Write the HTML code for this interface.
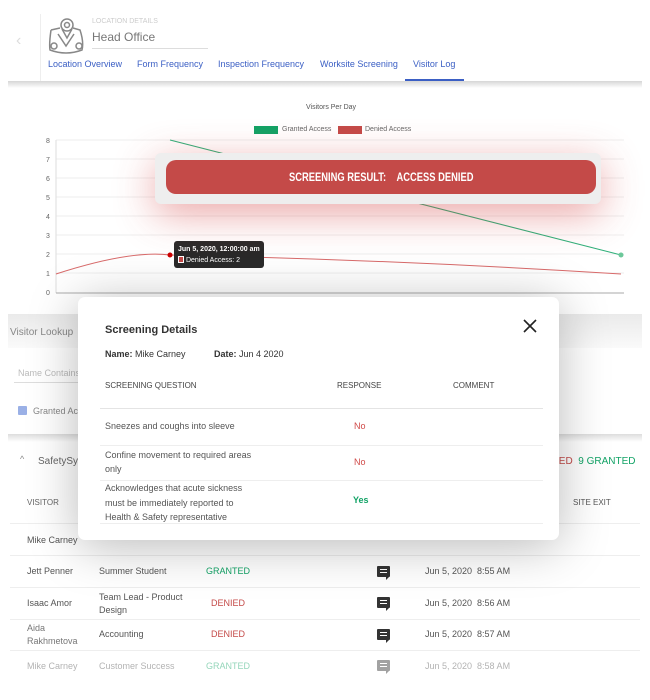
<!DOCTYPE html>
<html><head><meta charset="utf-8"><style>
*{margin:0;padding:0;box-sizing:border-box}
body{width:650px;height:700px;overflow:hidden;background:#fff;font-family:"Liberation Sans",sans-serif;position:relative;color:#555}
.a{position:absolute;white-space:nowrap}
.tab{position:absolute;top:59px;font-size:9px;color:#3b5fc4}
.row{position:absolute;left:10px;width:630px;border-top:1px solid #eee}
.c{font-size:9px;color:#555}
.ic{position:absolute;width:13px;height:11px;background:#333;border-radius:1px}
.ic:after{content:"";position:absolute;left:9px;bottom:-3px;border-left:3px solid #333;border-bottom:3px solid transparent}
.ic i{position:absolute;left:3px;right:3px;height:1px;background:#fff}
</style></head><body>
<!-- header -->
<div class="a" style="left:16px;top:32px;font-size:16px;color:#ddd">‹</div>
<div class="a" style="left:40px;top:14px;width:1px;height:68px;background:#eee"></div>
<svg class="a" style="left:46px;top:16px" width="40" height="38" viewBox="0 0 40 38" fill="none" stroke="#888" stroke-width="1.5">
<circle cx="21" cy="9" r="6"/><circle cx="21" cy="9" r="2.5"/>
<path d="M16 13 L21 22 L26 13"/>
<path d="M5 14 Q3 28 4 34 Q20 40 36 34 Q38 26 34 14 L27 12 M5 14 L14 12"/>
<circle cx="8" cy="30" r="3"/><circle cx="33" cy="30" r="3"/>
<path d="M12 18 L20 30 L28 18"/></svg>
<div class="a" style="left:92px;top:18px;font-size:7px;color:#ccc">LOCATION DETAILS</div>
<div class="a" style="left:92px;top:30px;font-size:12px;color:#777">Head Office</div>
<div class="a" style="left:92px;top:48px;width:116px;height:1px;background:#ddd"></div>
<div class="tab" style="left:48px">Location Overview</div>
<div class="tab" style="left:137px">Form Frequency</div>
<div class="tab" style="left:218px">Inspection Frequency</div>
<div class="tab" style="left:320px">Worksite Screening</div>
<div class="tab" style="left:413px">Visitor Log</div>
<div class="a" style="left:405px;top:79px;width:59px;height:2px;background:#3b5fc4"></div>
<div class="a" style="left:8px;top:81px;width:634px;height:7px;background:linear-gradient(#d6d6d6,#fff)"></div>
<!-- chart -->
<div class="a" style="left:306px;top:104px;font-size:7px;color:#555">Visitors Per Day</div>
<div class="a" style="left:254px;top:126px;width:24px;height:8px;background:#12a366"></div>
<div class="a" style="left:282px;top:126px;font-size:7px;color:#666">Granted Access</div>
<div class="a" style="left:338px;top:126px;width:24px;height:8px;background:#c44a48"></div>
<div class="a" style="left:365px;top:126px;font-size:7px;color:#666">Denied Access</div>
<svg class="a" style="left:0;top:130px" width="650" height="170">
<g font-size="7" fill="#666" font-family="Liberation Sans">
<text x="46" y="13">8</text><text x="46" y="32">7</text><text x="46" y="51">6</text><text x="46" y="70">5</text><text x="46" y="89">4</text><text x="46" y="108">3</text><text x="46" y="127">2</text><text x="46" y="146">1</text><text x="46" y="165">0</text></g>
<g stroke="#eee" stroke-width="1"><line x1="56" y1="10" x2="624" y2="10"/><line x1="56" y1="29" x2="624" y2="29"/><line x1="56" y1="48" x2="624" y2="48"/><line x1="56" y1="67" x2="624" y2="67"/><line x1="56" y1="86" x2="624" y2="86"/><line x1="56" y1="105" x2="624" y2="105"/><line x1="56" y1="124" x2="624" y2="124"/><line x1="56" y1="143" x2="624" y2="143"/></g>
<line x1="56" y1="10" x2="56" y2="163" stroke="#ddd"/>
<line x1="56" y1="163" x2="624" y2="163" stroke="#aaa"/>
<line x1="170" y1="10" x2="621" y2="125" stroke="#2fb07a"/>
<circle cx="621" cy="125" r="2.5" fill="#6cc89a"/>
<path d="M56 144 Q130 120 170 125 Q400 130 621 144" stroke="#d86a6a" fill="none"/>
<circle cx="170" cy="125" r="2.5" fill="#c00"/>
</svg>
<div class="a" style="left:174px;top:241px;width:90px;height:27px;background:#2a2a2a;border-radius:3px;color:#fff;font-size:7px;padding:3px 4px;line-height:11px"><b>Jun 5, 2020, 12:00:00 am</b><br><span style="display:inline-block;width:6px;height:7px;background:#c44a48;vertical-align:-1px;border:1px solid #fff"></span> Denied Access: 2</div>
<!-- banner -->
<div class="a" style="left:155px;top:153px;width:446px;height:51px;background:#eee;border-radius:6px;box-shadow:0 10px 40px rgba(210,60,60,.45)"></div>
<div class="a" style="left:166px;top:160px;width:430px;height:34px;background:#c44a48;border-radius:10px;color:#fff;font-weight:bold;font-size:12px;text-align:center;line-height:34px"><span style="display:inline-block;transform:scaleX(0.78)">SCREENING RESULT:&nbsp;&nbsp;&nbsp;&nbsp;ACCESS DENIED</span></div>
<!-- background lower -->
<div class="a" style="left:8px;top:314px;width:634px;height:34px;background:linear-gradient(#eaeaea,#fafafa)"></div>
<div class="a" style="left:10px;top:327px;font-size:10px;color:#888">Visitor Lookup</div>
<div class="a" style="left:18px;top:368px;font-size:9px;color:#bbb">Name Contains</div>
<div class="a" style="left:14px;top:382px;width:70px;height:1px;background:#ddd"></div>
<div class="a" style="left:18px;top:406px;width:9px;height:9px;background:#9ab0e6;border-radius:1px"></div>
<div class="a" style="left:33px;top:406px;font-size:9px;color:#888">Granted Ac</div>
<div class="a" style="left:8px;top:434px;width:634px;height:8px;background:linear-gradient(#ddd,#fff)"></div>
<div class="a" style="left:20px;top:454px;font-size:9px;color:#888">^</div>
<div class="a" style="left:38px;top:456px;font-size:10px;color:#666">SafetySy</div>
<div class="a" style="left:556px;top:456px;font-size:10px;color:#c44a48">IED <span style="color:#12a366">&nbsp;9 GRANTED</span></div>
<div class="a" style="left:27px;top:498px;font-size:8px;color:#666">VISITOR</div>
<div class="a" style="left:573px;top:498px;font-size:8px;color:#555">SITE EXIT</div>
<div class="row" style="top:523px"></div>
<div class="a c" style="left:27px;top:535px">Mike Carney</div>
<div class="row" style="top:555px"></div>
<div class="a c" style="left:27px;top:566px">Jett Penner</div><div class="a c" style="left:99px;top:566px">Summer Student</div><div class="a c" style="left:206px;top:566px;color:#12a366">GRANTED</div>
<div class="ic" style="left:377px;top:566px"><i style="top:3px"></i><i style="top:6px"></i></div><div class="a c" style="left:425px;top:566px">Jun 5, 2020&nbsp;&nbsp;8:55 AM</div>
<div class="row" style="top:587px"></div>
<div class="a c" style="left:27px;top:598px">Isaac Amor</div><div class="a c" style="left:99px;top:591px;line-height:13px">Team Lead - Product<br>Design</div><div class="a c" style="left:211px;top:598px;color:#c44a48">DENIED</div>
<div class="ic" style="left:377px;top:597px"><i style="top:3px"></i><i style="top:6px"></i></div><div class="a c" style="left:425px;top:598px">Jun 5, 2020&nbsp;&nbsp;8:56 AM</div>
<div class="row" style="top:619px"></div>
<div class="a c" style="left:27px;top:622px;line-height:13px;color:#777">Aida<br>Rakhmetova</div><div class="a c" style="left:99px;top:629px">Accounting</div><div class="a c" style="left:211px;top:629px;color:#c44a48">DENIED</div>
<div class="ic" style="left:377px;top:629px"><i style="top:3px"></i><i style="top:6px"></i></div><div class="a c" style="left:425px;top:629px">Jun 5, 2020&nbsp;&nbsp;8:57 AM</div>
<div class="row" style="top:650px"></div>
<div style="opacity:.45"><div class="a c" style="left:27px;top:661px">Mike Carney</div><div class="a c" style="left:99px;top:661px">Customer Success</div><div class="a c" style="left:206px;top:661px;color:#12a366">GRANTED</div>
<div class="ic" style="left:377px;top:660px"><i style="top:3px"></i><i style="top:6px"></i></div><div class="a c" style="left:425px;top:661px">Jun 5, 2020&nbsp;&nbsp;8:58 AM</div></div>
<!-- modal -->
<div class="a" style="left:78px;top:297px;width:481px;height:243px;background:#fff;border-radius:7px;box-shadow:0 6px 50px rgba(0,0,0,.28)">
<div class="a" style="left:27px;top:27px;font-size:11px;font-weight:bold;color:#333">Screening Details</div>
<svg class="a" style="left:445px;top:22px" width="14" height="14"><path d="M1 1L13 13M13 1L1 13" stroke="#222" stroke-width="1.6"/></svg>
<div class="a" style="left:27px;top:52px;font-size:9px;color:#333"><b>Name:</b> Mike Carney</div>
<div class="a" style="left:136px;top:52px;font-size:9px;color:#333"><b>Date:</b> Jun 4 2020</div>
<div class="a" style="left:27px;top:84px;font-size:8px;color:#444">SCREENING QUESTION</div>
<div class="a" style="left:259px;top:84px;font-size:8px;color:#444">RESPONSE</div>
<div class="a" style="left:375px;top:84px;font-size:8px;color:#444">COMMENT</div>
<div class="a" style="left:22px;top:111px;width:443px;height:1px;background:#e4e4e4"></div>
<div class="a" style="left:27px;top:124px;font-size:9px;color:#555">Sneezes and coughs into sleeve</div>
<div class="a" style="left:276px;top:124px;font-size:9px;color:#d04a48">No</div>
<div class="a" style="left:22px;top:148px;width:443px;height:1px;background:#eee"></div>
<div class="a" style="left:27px;top:151px;font-size:9px;color:#555;line-height:14px">Confine movement to required areas<br>only</div>
<div class="a" style="left:276px;top:160px;font-size:9px;color:#d04a48">No</div>
<div class="a" style="left:22px;top:183px;width:443px;height:1px;background:#eee"></div>
<div class="a" style="left:27px;top:184px;font-size:9px;color:#555;line-height:14.5px">Acknowledges that acute sickness<br>must be immediately reported to<br>Health &amp; Safety representative</div>
<div class="a" style="left:275px;top:198px;font-size:9px;font-weight:bold;color:#12a366">Yes</div>
<div class="a" style="left:22px;top:226px;width:443px;height:1px;background:#eee"></div>
</div>
</body></html>
